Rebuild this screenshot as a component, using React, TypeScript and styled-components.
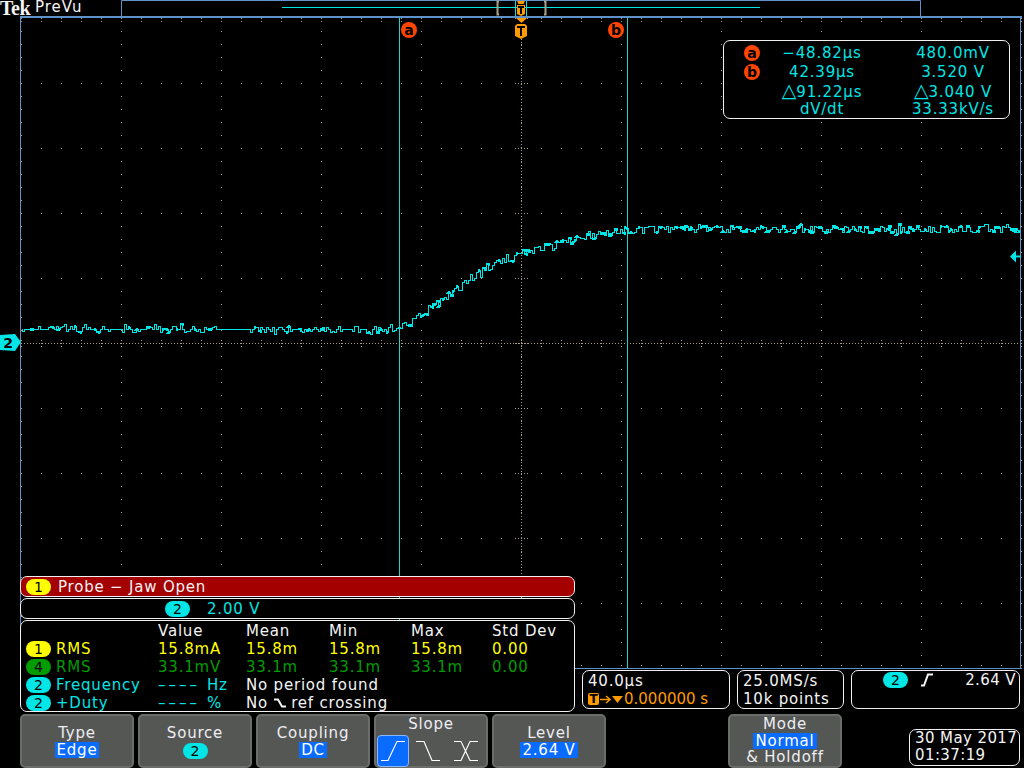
import * as React from 'react';
import styled, { createGlobalStyle } from 'styled-components';

const CYAN = '#00e6e6';
const YELLOW = '#ffff00';
const GREEN = '#009c00';
const ORANGE = '#ff9a00';
const RED_MARK = '#ff4400';
const BLUE = '#0a6cff';
const FRAME = '#5f93c8';
const TAN = '#a89f86';

const GlobalStyle = createGlobalStyle`
  html, body {
    margin: 0;
    padding: 0;
    background: #000;
  }
  body {
    font-family: 'DejaVu Sans', sans-serif;
    font-size: 15px;
    letter-spacing: 0.8px;
    color: #f4f4f4;
  }
`;

const Screen = styled.div`
  position: relative;
  display: flex;
  flex-direction: column;
  width: 1024px;
  height: 768px;
  overflow: hidden;
  background: #000;
`;

const TopBar = styled.header`
  display: flex;
  height: 16px;
`;

const Brand = styled.div`
  display: flex;
  align-items: flex-start;
  width: 121px;
  height: 16px;
`;

const TekLogo = styled.span`
  width: 35px;
  font-family: 'Liberation Serif', serif;
  font-size: 20px;
  font-weight: bold;
  letter-spacing: -0.4px;
  line-height: 16px;
`;

const PreVu = styled.span`
  font-size: 15px;
  letter-spacing: 1px;
  line-height: 15px;
`;

const RecordView = styled.svg`
  display: block;
  width: 800px;
  height: 16px;
`;

const Plot = styled.main`
  position: relative;
  height: 653px;
  padding-left: 20px;
`;

const PlotChart = styled.svg`
  display: block;
  width: 1002px;
  height: 653px;
`;

const CursorBadge = styled.span`
  display: flex;
  align-items: center;
  justify-content: center;
  width: 16px;
  height: 16px;
  border-radius: 50%;
  background: ${RED_MARK};
  color: #000;
  font-size: 14px;
  font-weight: bold;
  letter-spacing: 0;
  line-height: 16px;
`;

const PlotCursorBadge = styled(CursorBadge)<{ $x: number }>`
  position: absolute;
  top: 6px;
  left: ${props => props.$x}px;
`;

const CursorBox = styled.section`
  position: absolute;
  top: 24px;
  left: 723px;
  display: grid;
  grid-template-columns: 24px 108px 112px;
  grid-auto-rows: 18.7px;
  align-items: center;
  box-sizing: border-box;
  width: 287px;
  height: 79px;
  padding: 3px 0 0 20px;
  border: 1px solid #f0f0f0;
  border-radius: 7px;
  background: #000;
  color: ${CYAN};
`;

const CursorTime = styled.span`
  white-space: nowrap;
  text-align: center;
  line-height: 18px;
`;

const CursorValue = styled.span`
  width: 110px;
  margin-left: 22px;
  white-space: nowrap;
  text-align: center;
  line-height: 18px;
`;

const Delta = styled.span`
  font-size: 19px;
  line-height: 18px;
  letter-spacing: 0;
`;

const ChannelMarker = styled.div`
  position: absolute;
  top: 318px;
  left: 0;
  display: flex;
  align-items: center;
  justify-content: center;
  width: 21px;
  height: 17px;
  padding-right: 5px;
  box-sizing: border-box;
  background: ${CYAN};
  clip-path: polygon(0 1px, 15px 0, 21px 8px, 15px 17px, 0 16px);
  color: #000;
  font-size: 14px;
  font-weight: bold;
  letter-spacing: 0;
`;

const ReadoutStack = styled.aside`
  position: absolute;
  top: 576px;
  left: 20px;
  display: flex;
  flex-direction: column;
  gap: 1px;
  width: 555px;
`;

const Bar = styled.div<{ $fill?: string }>`
  display: flex;
  align-items: center;
  box-sizing: border-box;
  height: 21px;
  padding-left: 5px;
  border: 1px solid #f0f0f0;
  border-radius: 7px;
  background: ${props => props.$fill || '#000'};
`;

const ScaleBar = styled(Bar)`
  padding-left: 144px;
  color: ${CYAN};
`;

const Pill = styled.span<{ $color: string }>`
  display: inline-flex;
  flex: none;
  align-items: center;
  justify-content: center;
  width: 25px;
  height: 16px;
  border-radius: 8px;
  background: ${props => props.$color};
  color: #000;
  font-size: 14px;
  letter-spacing: 0;
  line-height: 16px;
`;

const BarLabel = styled.span`
  margin-left: 7px;
  white-space: nowrap;
`;

const ScaleValue = styled.span`
  margin-left: 17px;
`;

const MeasureTable = styled.div`
  display: flex;
  flex-direction: column;
  box-sizing: border-box;
  height: 92px;
  padding-top: 1px;
  border: 1px solid #f0f0f0;
  border-radius: 7px;
  background: #000;
`;

const MeasureRow = styled.div<{ $color?: string }>`
  display: grid;
  grid-template-columns: 35px 102px 88px 83px 82px 81px 1fr;
  align-items: center;
  height: 18px;
  color: ${props => props.$color || '#f4f4f4'};
  white-space: nowrap;
`;

const PillCell = styled.span`
  display: flex;
  padding-left: 5px;
`;

const WideCell = styled.span`
  display: flex;
  align-items: center;
  grid-column: span 3;
  color: #f4f4f4;
`;

const DashValue = styled.span`
  display: flex;
  gap: 7px;
`;

const Dashes = styled.span`
  width: 42px;
  letter-spacing: 3px;
`;

const Footer = styled.footer`
  display: flex;
  flex: 1;
  flex-direction: column;
`;

const StatusRow = styled.div`
  display: flex;
  justify-content: flex-end;
  gap: 7px;
  height: 45px;
  padding: 1px 4px 0 0;
  box-sizing: border-box;
`;

const StatusBox = styled.div<{ $width: number }>`
  box-sizing: border-box;
  width: ${props => props.$width}px;
  height: 39px;
  padding: 1px 0 0 5px;
  border: 1px solid #f0f0f0;
  border-radius: 7px;
  line-height: 18px;
  white-space: nowrap;
`;

const DelayLine = styled.div`
  display: flex;
  align-items: center;
  color: ${ORANGE};
  letter-spacing: 0;
`;

const DelayFlag = styled.span`
  display: flex;
  align-items: center;
  justify-content: center;
  width: 11px;
  height: 12px;
  background: ${ORANGE};
  border-radius: 2px;
  color: #000;
  font-size: 12px;
  font-weight: bold;
  letter-spacing: 0;
`;

const TriggerLine = styled.div`
  display: flex;
  align-items: center;
  gap: 12px;
  height: 16px;
  padding: 0 3px 0 26px;
`;

const TriggerLevel = styled.span`
  margin-left: auto;
  letter-spacing: 0.4px;
`;

const KeyRow = styled.div`
  display: flex;
  align-items: flex-start;
  gap: 4px;
  padding-left: 20px;
`;

const SoftKey = styled.div<{ $width?: number }>`
  display: flex;
  flex-direction: column;
  align-items: center;
  box-sizing: border-box;
  width: ${props => props.$width || 114}px;
  height: 54px;
  padding-top: 9px;
  border: 2px solid #6b6d6b;
  border-radius: 5px;
  background: #555755;
  color: #eeeef4;
  line-height: 17px;
  white-space: nowrap;
`;

const SlopeKey = styled(SoftKey)`
  padding-top: 0;
`;

const ModeKey = styled(SoftKey)`
  margin-left: 118px;
  padding-top: 0;
`;

const Selected = styled.span`
  padding: 0 2px;
  background: ${BLUE};
  color: #fff;
  line-height: 16px;
`;

const KeyPill = styled(Pill)`
  margin-top: 1px;
`;

const SlopeOptions = styled.div`
  display: flex;
  align-items: flex-end;
  width: 100%;
  height: 32px;
  margin-top: 2px;
  padding-left: 1px;
  box-sizing: border-box;
`;

const SlopeOption = styled.span<{ $active?: boolean }>`
  display: flex;
  align-items: center;
  justify-content: center;
  width: ${props => (props.$active ? 32 : 38)}px;
  height: 32px;
  box-sizing: border-box;
  border: 1px solid ${props => (props.$active ? '#8ab8ff' : 'transparent')};
  border-radius: 4px;
  background: ${props => (props.$active ? BLUE : 'transparent')};
`;

const DateBox = styled.div`
  box-sizing: border-box;
  width: 111px;
  height: 37px;
  margin: 15px 0 0 63px;
  padding: 0 0 0 5px;
  border: 1px solid #f0f0f0;
  border-radius: 7px;
  letter-spacing: 0.4px;
  line-height: 17px;
  white-space: nowrap;
`;

// small seeded generator so the noise on the trace stays the same every load
const makeRandom = (seed: number) => () => {
  seed = (seed * 1664525 + 1013904223) % 4294967296;
  return seed / 4294967296;
};

const curve: [number, number][] = [
  [21, 329], [392, 329], [400, 326], [410, 321], [420, 314], [440, 300], [460, 285], [480, 272],
  [500, 261], [521, 255], [540, 248], [560, 243], [580, 238], [600, 233], [627, 230], [660, 229],
  [1021, 229],
];

const baseAt = (x: number) => {
  for (let i = 1; i < curve.length; i++) {
    if (x <= curve[i][0]) {
      const [x0, y0] = curve[i - 1];
      const [x1, y1] = curve[i];
      return y0 + ((y1 - y0) * (x - x0)) / (x1 - x0);
    }
  }
  return 229;
};

const buildTrace = () => {
  const random = makeRandom(2017);
  let line = 'M21.5 329.5';
  let blobs = '';
  for (let x = 22; x < 1021; x += 2) {
    const quiet = (x > 215 && x < 250) || (x > 340 && x < 352);
    const chance = quiet ? 0.04 : x < 400 ? 0.5 : 0.8;
    let offset = 0;
    if (random() < chance) {
      const size = random();
      const amount = size > 0.9 ? 5 : size > 0.5 ? 3 : 2;
      offset = random() > 0.5 ? amount : -amount;
    }
    const y = Math.round(baseAt(x) + offset);
    line += `H${x + 0.5}V${y + 0.5}`;
    // the scope paints runs of samples on top of each other, which shows as thick spots
    if (!quiet && random() < (x < 400 ? 0.16 : 0.4)) {
      blobs += `M${x} ${y - 1}h${random() > 0.5 ? 4 : 2}v3h${random() > 0.5 ? -4 : -2}z`;
    }
  }
  return { line: line + 'H1020.5', blobs };
};

const trace = buildTrace();

const buildDots = () => {
  const dots: string[] = [];
  const rowY = (j: number) => 18 + j * 13;
  const colX = (i: number) => 21 + i * 20;
  for (let i = 0; i <= 50; i++) {
    for (let j = 0; j <= 50; j++) {
      const onMajorCol = i % 5 === 0;
      const onMajorRow = j % 5 === 0;
      if (!onMajorCol && !onMajorRow) continue;
      dots.push(`M${colX(i)} ${rowY(j)}h1v1h-1z`);
    }
    // little ticks on every graticule row
    for (let j = 0; j <= 50; j += 5) {
      if (j === 25 || j === 0 || j === 50) {
        dots.push(`M${colX(i)} ${rowY(j) - 3}h1v1h-1z`, `M${colX(i)} ${rowY(j) + 3}h1v1h-1z`);
      }
    }
  }
  for (let j = 0; j <= 50; j++) {
    for (const dx of [-3, 3, -6, 6]) {
      if (j % 5 === 0) dots.push(`M${521 + dx} ${rowY(j)}h1v1h-1z`);
    }
  }
  // centre cross lines
  for (let x = 21; x < 1021; x += 3) dots.push(`M${x} 343h1v1h-1z`);
  for (let y = 18; y < 668; y += 3) dots.push(`M521 ${y}h1v1h-1z`);
  return dots.join('');
};

const gridPath = buildDots();

const TrailingEdge = () => (
  <svg width="12" height="12" viewBox="0 0 12 12">
    <path d="M0 2.500h4l4 7h4" fill="none" stroke="#f4f4f4" strokeWidth="2" />
  </svg>
);

const RisingEdge = () => (
  <svg width="14" height="14" viewBox="0 0 14 14">
    <path d="M1 12.500h3L8 1.500h5" fill="none" stroke="#f4f4f4" strokeWidth="2" />
  </svg>
);

const SlopeRise = () => (
  <svg width="26" height="22" viewBox="0 0 26 22">
    <path d="M1 20.500h7L17 1.500h8" fill="none" stroke="#fff" strokeWidth="1.2" />
  </svg>
);

const SlopeFall = () => (
  <svg width="26" height="22" viewBox="0 0 26 22">
    <path d="M1 1.500h8l8 19h8" fill="none" stroke="#fff" strokeWidth="1.2" />
  </svg>
);

const SlopeBoth = () => (
  <svg width="26" height="22" viewBox="0 0 26 22">
    <path d="M1 1.500h7l9 19h8M1 20.500h7l9-19h8" fill="none" stroke="#fff" strokeWidth="1.2" />
  </svg>
);

const DelayArrows = () => (
  <svg width="25" height="12" viewBox="0 0 25 12">
    <path d="M1 6.500h9" stroke={ORANGE} strokeWidth="1.5" />
    <path d="M7 3l4 3.500-4 3.500" fill="none" stroke={ORANGE} strokeWidth="1.5" />
    <path d="M13 3h11l-5.500 7z" fill={ORANGE} />
  </svg>
);

export default function App() {
  return (
    <Screen>
      <GlobalStyle />
      <TopBar>
        <Brand>
          <TekLogo>Tek</TekLogo>
          <PreVu>PreVu</PreVu>
        </Brand>
        <RecordView viewBox="121 0 800 16">
          <path d="M121.500 16V.5h799V16" fill="none" stroke={FRAME} />
          <path d="M282 7.500h478" stroke={CYAN} />
          <path d="M499 1.500h-1.500v13H499M544 1.500h1.500v13H544" fill="none" stroke={TAN} strokeWidth="2" />
          <path d="M515.500 1v15M526.500 1v15" stroke={CYAN} />
          <path d="M517 1h8l-1.500 3h-5zM517 5h8v9l-4 2-4-2z" fill={ORANGE} />
          <path d="M518 6h6v2h-2v6h-2V8h-2z" fill="#000" />
        </RecordView>
      </TopBar>
      <Plot>
        <PlotChart viewBox="20 16 1002 653">
          <path d={gridPath} fill={TAN} shapeRendering="crispEdges" />
          <path d="M399.500 17v651M627.500 17v651" stroke="#1fd2d2" />
          <path d={trace.line} fill="none" stroke={CYAN} strokeWidth="1.5" shapeRendering="crispEdges" />
          <path d={trace.blobs} fill={CYAN} shapeRendering="crispEdges" />
          <path d="M20.500 16v653M1020.500 16v653M20 668.500h1002" fill="none" stroke={FRAME} />
          <path d="M20 17h1002" stroke={FRAME} strokeWidth="2" />
          <path d="M516 18h11l-5.500 5z" fill={ORANGE} />
          <path d="M515 26l2-2h8l2 2v10l-6 3-6-3z" fill={ORANGE} />
          <path d="M517 26h8v2h-3v8h-2v-8h-3z" fill="#000" />
          <path d="M1010 256.500l6-6v5h5v2h-5v5z" fill={CYAN} />
        </PlotChart>
        <PlotCursorBadge $x={401}>a</PlotCursorBadge>
        <PlotCursorBadge $x={608}>b</PlotCursorBadge>
        <CursorBox>
          <CursorBadge>a</CursorBadge>
          <CursorTime>−48.82µs</CursorTime>
          <CursorValue>480.0mV</CursorValue>
          <CursorBadge>b</CursorBadge>
          <CursorTime>42.39µs</CursorTime>
          <CursorValue>3.520 V</CursorValue>
          <span />
          <CursorTime>
            <Delta>△</Delta>91.22µs
          </CursorTime>
          <CursorValue>
            <Delta>△</Delta>3.040 V
          </CursorValue>
          <span />
          <CursorTime>dV/dt</CursorTime>
          <CursorValue>33.33kV/s</CursorValue>
        </CursorBox>
        <ChannelMarker>2</ChannelMarker>
      </Plot>
      <Footer>
        <StatusRow>
          <StatusBox $width={148}>
            40.0µs
            <DelayLine>
              <DelayFlag>T</DelayFlag>
              <DelayArrows />
              0.000000 s
            </DelayLine>
          </StatusBox>
          <StatusBox $width={107}>
            25.0MS/s
            <br />
            10k points
          </StatusBox>
          <StatusBox $width={169}>
            <TriggerLine>
              <Pill $color={CYAN}>2</Pill>
              <RisingEdge />
              <TriggerLevel>2.64 V</TriggerLevel>
            </TriggerLine>
          </StatusBox>
        </StatusRow>
        <KeyRow>
          <SoftKey>
            Type
            <Selected>Edge</Selected>
          </SoftKey>
          <SoftKey>
            Source
            <KeyPill $color={CYAN}>2</KeyPill>
          </SoftKey>
          <SoftKey>
            Coupling
            <Selected>DC</Selected>
          </SoftKey>
          <SlopeKey>
            Slope
            <SlopeOptions>
              <SlopeOption $active>
                <SlopeRise />
              </SlopeOption>
              <SlopeOption>
                <SlopeFall />
              </SlopeOption>
              <SlopeOption>
                <SlopeBoth />
              </SlopeOption>
            </SlopeOptions>
          </SlopeKey>
          <SoftKey>
            Level
            <Selected>2.64 V</Selected>
          </SoftKey>
          <ModeKey>
            Mode
            <Selected>Normal</Selected>
            & Holdoff
          </ModeKey>
          <DateBox>
            30 May 2017
            <br />
            01:37:19
          </DateBox>
        </KeyRow>
      </Footer>
      <ReadoutStack>
        <Bar $fill="#a40000">
          <Pill $color={YELLOW}>1</Pill>
          <BarLabel>Probe − Jaw Open</BarLabel>
        </Bar>
        <ScaleBar>
          <Pill $color={CYAN}>2</Pill>
          <ScaleValue>2.00 V</ScaleValue>
        </ScaleBar>
        <MeasureTable>
          <MeasureRow>
            <span />
            <span />
            <span>Value</span>
            <span>Mean</span>
            <span>Min</span>
            <span>Max</span>
            <span>Std Dev</span>
          </MeasureRow>
          <MeasureRow $color={YELLOW}>
            <PillCell>
              <Pill $color={YELLOW}>1</Pill>
            </PillCell>
            <span>RMS</span>
            <span>15.8mA</span>
            <span>15.8m</span>
            <span>15.8m</span>
            <span>15.8m</span>
            <span>0.00</span>
          </MeasureRow>
          <MeasureRow $color={GREEN}>
            <PillCell>
              <Pill $color={GREEN}>4</Pill>
            </PillCell>
            <span>RMS</span>
            <span>33.1mV</span>
            <span>33.1m</span>
            <span>33.1m</span>
            <span>33.1m</span>
            <span>0.00</span>
          </MeasureRow>
          <MeasureRow $color={CYAN}>
            <PillCell>
              <Pill $color={CYAN}>2</Pill>
            </PillCell>
            <span>Frequency</span>
            <DashValue>
              <Dashes>––––</Dashes>
              <span>Hz</span>
            </DashValue>
            <WideCell>No period found</WideCell>
          </MeasureRow>
          <MeasureRow $color={CYAN}>
            <PillCell>
              <Pill $color={CYAN}>2</Pill>
            </PillCell>
            <span>+Duty</span>
            <DashValue>
              <Dashes>––––</Dashes>
              <span>%</span>
            </DashValue>
            <WideCell>
              No&nbsp;
              <TrailingEdge />
              &nbsp;ref crossing
            </WideCell>
          </MeasureRow>
        </MeasureTable>
      </ReadoutStack>
    </Screen>
  );
}
